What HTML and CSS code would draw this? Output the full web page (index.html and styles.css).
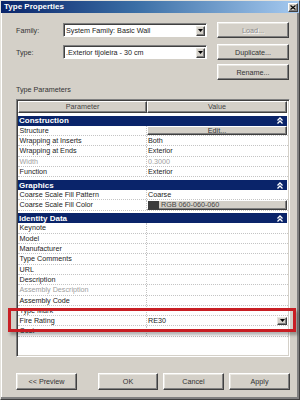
FILE: index.html
```html
<!DOCTYPE html>
<html>
<head>
<meta charset="utf-8">
<link rel="stylesheet" href="styles.css">
</head>
<body>
<div class="dialog">
  <div class="titlebar">
    <span class="title">Type Properties</span>
    <span class="close"><svg width="6" height="5" viewBox="0 0 6 5"><path d="M0.5 0.5 L5.5 4.5 M5.5 0.5 L0.5 4.5" stroke="#000" stroke-width="1.2"/></svg></span>
  </div>
  <div class="content">
    <div class="row">
      <span class="lbl">Family:</span>
      <div class="combo"><span class="ctext">System Family: Basic Wall</span><span class="cbtn"><svg width="5" height="3" viewBox="0 0 5 3"><path d="M0 0 H5 L2.5 3 Z" fill="#000"/></svg></span></div>
      <button class="btn disabled">Load...</button>
    </div>
    <div class="row r2">
      <span class="lbl">Type:</span>
      <div class="combo"><span class="ctext">.Exterior tijoleira - 30 cm</span><span class="cbtn"><svg width="5" height="3" viewBox="0 0 5 3"><path d="M0 0 H5 L2.5 3 Z" fill="#000"/></svg></span></div>
      <button class="btn">Duplicate...</button>
    </div>
    <div class="row r3">
      <button class="btn">Rename...</button>
    </div>
    <div class="section-label">Type Parameters</div>
    <div class="table">
      <div class="thead"><div class="th p">Parameter</div><div class="th v">Value</div></div>
      <div class="group">
        <div class="band"><span>Construction</span><svg class="coll" width="6" height="7" viewBox="0 0 6 7"><path d="M0.5 3.5 L3 1 L5.5 3.5 M0.5 6.5 L3 4 L5.5 6.5" stroke="#fff" stroke-width="1.3" fill="none"/></svg></div>
        <div class="r"><div class="k">Structure</div><div class="v vb"><span class="editbtn">Edit...</span></div></div>
        <div class="r"><div class="k">Wrapping at Inserts</div><div class="v">Both</div></div>
        <div class="r"><div class="k">Wrapping at Ends</div><div class="v">Exterior</div></div>
        <div class="r dis"><div class="k">Width</div><div class="v">0.3000</div></div>
        <div class="r"><div class="k">Function</div><div class="v">Exterior</div></div>
      </div>
      <div class="group">
        <div class="band"><span>Graphics</span><svg class="coll" width="6" height="7" viewBox="0 0 6 7"><path d="M0.5 3.5 L3 1 L5.5 3.5 M0.5 6.5 L3 4 L5.5 6.5" stroke="#fff" stroke-width="1.3" fill="none"/></svg></div>
        <div class="r"><div class="k">Coarse Scale Fill Pattern</div><div class="v">Coarse</div></div>
        <div class="r"><div class="k">Coarse Scale Fill Color</div><div class="v vb"><span class="colorbtn"><span class="swatch"></span><span>RGB 060-060-060</span></span></div></div>
      </div>
      <div class="group">
        <div class="band"><span>Identity Data</span><svg class="coll" width="6" height="7" viewBox="0 0 6 7"><path d="M0.5 3.5 L3 1 L5.5 3.5 M0.5 6.5 L3 4 L5.5 6.5" stroke="#fff" stroke-width="1.3" fill="none"/></svg></div>
        <div class="r"><div class="k">Keynote</div><div class="v"></div></div>
        <div class="r"><div class="k">Model</div><div class="v"></div></div>
        <div class="r"><div class="k">Manufacturer</div><div class="v"></div></div>
        <div class="r"><div class="k">Type Comments</div><div class="v"></div></div>
        <div class="r"><div class="k">URL</div><div class="v"></div></div>
        <div class="r"><div class="k">Description</div><div class="v"></div></div>
        <div class="r dis"><div class="k">Assembly Description</div><div class="v"></div></div>
        <div class="r"><div class="k">Assembly Code</div><div class="v"></div></div>
        <div class="r"><div class="k">Type Mark</div><div class="v"></div></div>
        <div class="r sel"><div class="k">Fire Rating</div><div class="v vsel"><span>RE30</span><span class="cbtn small"><svg width="5" height="3" viewBox="0 0 5 3"><path d="M0 0 H5 L2.5 3 Z" fill="#000"/></svg></span></div></div>
        <div class="r"><div class="k">Cost</div><div class="v"></div></div>
      </div>
    </div>
    <div class="footer">
      <button class="btn fbtn preview">&lt;&lt; Preview</button>
      <button class="btn fbtn ok">OK</button>
      <button class="btn fbtn">Cancel</button>
      <button class="btn fbtn">Apply</button>
    </div>
  </div>
  <div class="highlight"></div>
</div>
</body>
</html>
```

FILE: styles.css
```css
* { box-sizing: border-box; }
html, body { margin: 0; padding: 0; }
body {
  width: 300px;
  height: 400px;
  overflow: hidden;
  background: #d4d0c8;
  font-family: "Liberation Sans", Arial, sans-serif;
  font-size: 7.2px;
  color: #222;
}
.dialog {
  position: relative;
  width: 300px;
  height: 400px;
  background: #d4d0c8;
  border: 1px solid;
  border-color: #e4e2dc #404040 #404040 #e4e2dc;
  box-shadow: inset -2px -2px #808080, inset 1px 1px #fff;
}
.titlebar {
  height: 12px;
  display: flex;
  align-items: center;
  justify-content: space-between;
  padding: 0 1px 0 3px;
  background: linear-gradient(to right, #0a246a 0%, #3a6ea5 45%, #a6caf0 100%);
}
.title {
  color: #fff;
  font-weight: bold;
  font-size: 8px;
  line-height: 12px;
}
.close {
  width: 10px;
  height: 9px;
  display: flex;
  align-items: center;
  justify-content: center;
  background: #d4d0c8;
  border: 1px solid;
  border-color: #fff #404040 #404040 #fff;
  box-shadow: inset -1px -1px #808080;
}
.content {
  padding: 9px 0 0 15px;
}
.row {
  display: flex;
  align-items: center;
  height: 16px;
}
.r2 { margin-top: 6px; }
.r3 { margin-top: 4px; padding-left: 191px; }
.lbl {
  width: 47px;
  color: #333;
}
.combo {
  width: 144px;
  height: 14px;
  display: flex;
  align-items: center;
  background: #fff;
  border: 1px solid;
  border-color: #808080 #fff #fff #808080;
  box-shadow: inset 1px 1px #404040;
  padding: 1px 1px 0 2px;
}
.ctext {
  flex: 1;
  color: #222;
  white-space: nowrap;
}
.cbtn {
  width: 9px;
  height: 10px;
  display: flex;
  align-items: center;
  justify-content: center;
  background: #d4d0c8;
  border: 1px solid;
  border-color: #e8e6e0 #404040 #404040 #e8e6e0;
  box-shadow: inset -1px -1px #808080;
}
.btn {
  width: 72px;
  height: 16px;
  margin: 0 0 0 10px;
  padding: 0;
  font-family: inherit;
  font-size: 7.2px;
  color: #333;
  background: #d4d0c8;
  border: 1px solid;
  border-color: #fff #404040 #404040 #fff;
  box-shadow: inset -1px -1px #808080, inset 1px 1px #e8e6e0;
}
.btn.disabled {
  color: #8a8a8a;
  text-shadow: 1px 1px #fff;
}
.section-label {
  margin-top: 5px;
  height: 9px;
  line-height: 9px;
  color: #333;
}
.table {
  margin-top: 5px;
  width: 274px;
  height: 258px;
  background: #fff;
  border: 1px solid;
  border-color: #808080 #fff #fff #808080;
  box-shadow: inset 1px 1px #404040, inset -1px -1px #d4d0c8;
  padding: 1px;
}
.thead {
  display: flex;
  height: 12px;
}
.th {
  background: #d4d0c8;
  border: 1px solid;
  border-color: #fff #404040 #404040 #fff;
  box-shadow: inset -1px -1px #808080;
  text-align: center;
  line-height: 10px;
  color: #444;
}
.th.p { width: 129px; }
.th.v { flex: 1; margin-right: 1px; }
.group { padding-top: 2.8px; }
.band {
  height: 10px;
  background: #0a246a;
  color: #fff;
  font-weight: bold;
  font-size: 8px;
  display: flex;
  align-items: center;
  justify-content: space-between;
  padding: 0 4px 0 1px;
  margin-right: 1px;
}
.r {
  display: flex;
  height: 10.3px;
  line-height: 9.3px;
  border-bottom: 1px dotted #c4c4c4;
  color: #222;
}
.r .k {
  width: 129px;
  padding-left: 1.5px;
  border-right: 1px dotted #c4c4c4;
  white-space: nowrap;
  overflow: hidden;
}
.r .v {
  flex: 1;
  padding-left: 1px;
  white-space: nowrap;
}
.r.dis { color: #a0a0a0; }
.r .vb { padding: 0 1px 0 0; }
.editbtn {
  display: block;
  height: 100%;
  text-align: center;
  line-height: 8px;
  background: #d4d0c8;
  border: 1px solid;
  border-color: #fff #404040 #404040 #fff;
  box-shadow: inset -1px -1px #808080;
  color: #333;
}
.colorbtn {
  display: flex;
  height: 100%;
  line-height: 8px;
  background: #d4d0c8;
  border: 1px solid;
  border-color: #fff #404040 #404040 #fff;
  box-shadow: inset -1px -1px #808080;
  color: #444;
}
.swatch {
  width: 11px;
  margin-right: 2px;
  background: #3c3c3c;
}
.vsel {
  display: flex;
  align-items: center;
  justify-content: space-between;
  padding-right: 1px;
}
.cbtn.small {
  width: 10px;
  height: 8px;
}
.footer {
  display: flex;
  margin-top: 16px;
}
.fbtn {
  width: 61px;
  height: 17px;
  margin-left: 5px;
}
.fbtn.preview { margin-left: 0; }
.fbtn.ok { margin-left: 21px; width: 60px; }
.highlight {
  position: absolute;
  left: 7px;
  top: 307px;
  width: 288px;
  height: 24px;
  border: 3px solid #c81e24;
  box-shadow: 2px 3px 3px rgba(0, 0, 0, 0.3);
  pointer-events: none;
}
```
